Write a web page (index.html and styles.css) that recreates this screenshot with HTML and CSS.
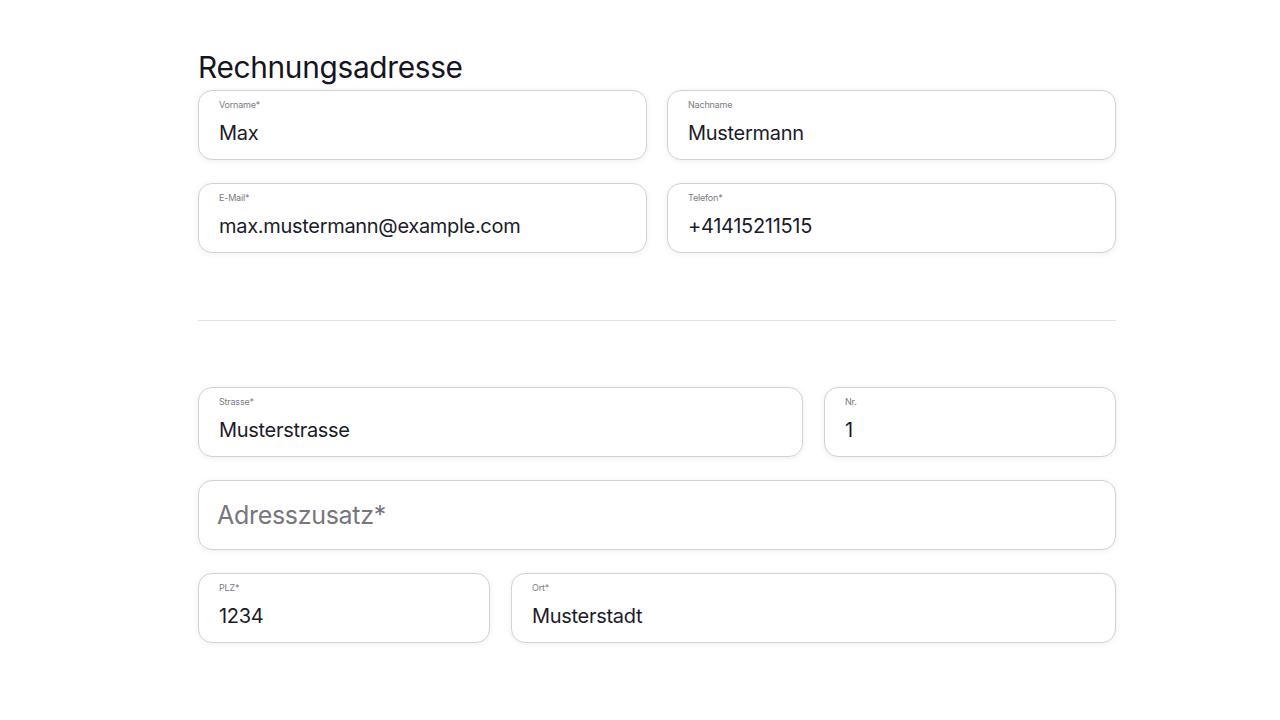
FILE: index.html
```html
<!DOCTYPE html>
<html lang="de">
<head>
<meta charset="utf-8">
<link rel="stylesheet" href="styles.css">
</head>
<body>
<main class="form">
  <h1 class="title">Rechnungsadresse</h1>
  <div class="row two">
    <div class="field"><span class="label">Vorname*</span><span class="value">Max</span></div>
    <div class="field"><span class="label">Nachname</span><span class="value">Mustermann</span></div>
  </div>
  <div class="row two">
    <div class="field"><span class="label">E-Mail*</span><span class="value">max.mustermann@example.com</span></div>
    <div class="field"><span class="label">Telefon*</span><span class="value">+41415211515</span></div>
  </div>
  <hr class="divider">
  <div class="row street">
    <div class="field"><span class="label">Strasse*</span><span class="value">Musterstrasse</span></div>
    <div class="field"><span class="label">Nr.</span><span class="value">1</span></div>
  </div>
  <div class="row one">
    <div class="field empty"><span class="placeholder">Adresszusatz*</span></div>
  </div>
  <div class="row city">
    <div class="field"><span class="label">PLZ*</span><span class="value">1234</span></div>
    <div class="field"><span class="label">Ort*</span><span class="value">Musterstadt</span></div>
  </div>
</main>
</body>
</html>
```

FILE: styles.css
```css
html, body {
  margin: 0;
  padding: 0;
  background: #ffffff;
}
body {
  font-family: Inter, "Noto Sans", "Liberation Sans", sans-serif;
  color: #1c1b29;
}
.form {
  width: 918px;
  margin-left: 198px;
  padding-top: 49px;
}
.title {
  margin: 0 0 5px 0;
  font-size: 29.8px;
  font-weight: 400;
  line-height: 36px;
  color: #15141f;
  letter-spacing: -0.3px;
}
.row {
  display: grid;
  column-gap: 20px;
  margin-bottom: 23px;
}
.row.two { grid-template-columns: 1fr 1fr; }
.row.street { grid-template-columns: 1fr 292px; column-gap: 21px; }
.row.city { grid-template-columns: 292px 1fr; column-gap: 21px; }
.row.one { grid-template-columns: 1fr; }
.field {
  box-sizing: border-box;
  height: 70px;
  border: 1px solid #d2d2d5;
  border-radius: 14px;
  background: #fff;
  box-shadow: 0 1px 6px rgba(0, 0, 0, 0.07);
  padding: 8px 20px 0 20px;
  display: flex;
  flex-direction: column;
}
.label {
  font-size: 9px;
  line-height: 12px;
  color: #7a7a82;
  letter-spacing: -0.2px;
}
.value {
  margin-top: 10px;
  font-size: 20px;
  line-height: 24px;
  color: #1c1b29;
  letter-spacing: -0.3px;
}
.field.empty {
  justify-content: center;
  padding-top: 0;
  padding-left: 18px;
}
.placeholder {
  font-size: 25px;
  line-height: 30px;
  color: #77767e;
  letter-spacing: -0.3px;
}
.divider {
  border: 0;
  border-top: 1px solid #e2e2e4;
  margin: 67px 0 66px 0;
}
```
